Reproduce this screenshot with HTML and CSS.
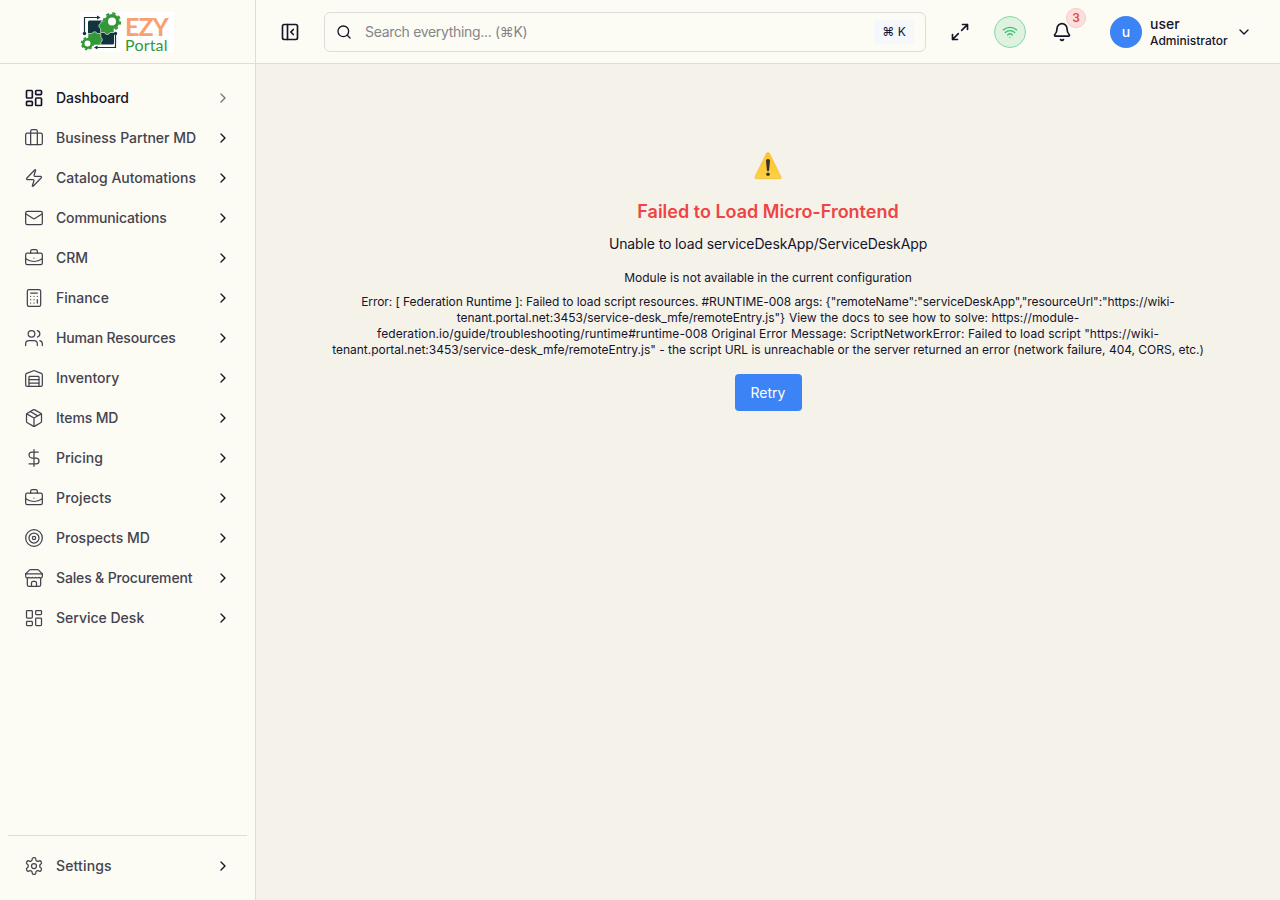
FILE: index.html
```html
<!DOCTYPE html>
<html lang="en">
<head>
    <meta charset="UTF-8">
    <meta name="viewport" content="width=device-width, initial-scale=1.0">
    <title>EZY Portal</title>
    <link rel="stylesheet" href="styles.css">
</head>
<body>
    <!-- Shared icons -->
    <svg class="sprite" xmlns="http://www.w3.org/2000/svg">
        <symbol id="chevron" viewBox="0 0 24 24"><path d="m9 18 6-6-6-6"/></symbol>
        <symbol id="dashboard" viewBox="0 0 24 24">
            <rect width="7" height="9" x="3" y="3" rx="1"/><rect width="7" height="5" x="14" y="3" rx="1"/>
            <rect width="7" height="9" x="14" y="12" rx="1"/><rect width="7" height="5" x="3" y="16" rx="1"/>
        </symbol>
        <symbol id="briefcase" viewBox="0 0 24 24">
            <path d="M12 12h.01"/><path d="M16 6V4a2 2 0 0 0-2-2h-4a2 2 0 0 0-2 2v2"/>
            <path d="M22 13a18.15 18.15 0 0 1-20 0"/><rect width="20" height="14" x="2" y="6" rx="2"/>
        </symbol>
    </svg>

    <div class="layout">
        <aside class="sidebar">
            <div class="brand">
                <div class="logo">
                    <svg class="logo-mark" viewBox="0 0 42 40">
                        <!-- circuit lines -->
                        <path fill="none" stroke="#12343f" stroke-width="1.2" d="M4.500 20V5.500H18M17 35.500h18.500V22"/>
                        <g fill="#12343f">
                            <circle cx="4.500" cy="21.500" r="1.700"/><circle cx="35.500" cy="21.500" r="1.700"/>
                            <path d="m17 3.500 3.500 2-3.500 2zM17.500 33.500l-3.500 2 3.500 2z"/>
                            <rect x="8" y="8.500" width="26" height="24" rx="1.500"/>
                        </g>
                        <!-- puzzle pieces -->
                        <path fill="#339837" stroke="#fff" stroke-width=".6" d="M21.500 9H34v11.500h-4a2.800 2.800 0 0 1-5.400 0h-4v-4a2.800 2.800 0 0 1 0-5.200z"/>
                        <path fill="#339837" stroke="#fff" stroke-width=".6" d="M8 21.500h4a2.800 2.800 0 0 1 5.200 0h3.600v3.700a2.800 2.800 0 0 1 0 5V33H8z"/>
                        <!-- gears -->
                        <circle cx="32" cy="9.500" r="5.800" fill="#fff" stroke="#339837" stroke-width="3.600"/>
                        <circle cx="32" cy="9.500" r="8.200" fill="none" stroke="#339837" stroke-width="2" stroke-dasharray="3.220 3.220"/>
                        <circle cx="7.500" cy="31.500" r="4.300" fill="#fff" stroke="#339837" stroke-width="2.600"/>
                        <circle cx="7.500" cy="31.500" r="6" fill="none" stroke="#339837" stroke-width="1.500" stroke-dasharray="2.360 2.350"/>
                    </svg>
                    <div class="logo-text">
                        <span class="logo-ezy">EZY</span>
                        <span class="logo-portal">Portal</span>
                    </div>
                </div>
            </div>

            <nav class="menu">
                <a class="item active">
                    <svg class="icon"><use href="#dashboard"/></svg>
                    <span>Dashboard</span>
                    <svg class="chevron"><use href="#chevron"/></svg>
                </a>
                <a class="item">
                    <svg class="icon" viewBox="0 0 24 24"><path d="M16 20V4a2 2 0 0 0-2-2h-4a2 2 0 0 0-2 2v16"/><rect width="20" height="14" x="2" y="6" rx="2"/></svg>
                    <span>Business Partner MD</span>
                    <svg class="chevron"><use href="#chevron"/></svg>
                </a>
                <a class="item">
                    <svg class="icon" viewBox="0 0 24 24"><path d="M4 14a1 1 0 0 1-.78-1.630l9.900-10.200a.5.5 0 0 1 .86.460l-1.920 6.020A1 1 0 0 0 13 10h7a1 1 0 0 1 .78 1.630l-9.900 10.200a.5.5 0 0 1-.86-.460l1.920-6.020A1 1 0 0 0 11 14z"/></svg>
                    <span>Catalog Automations</span>
                    <svg class="chevron"><use href="#chevron"/></svg>
                </a>
                <a class="item tight">
                    <svg class="icon" viewBox="0 0 24 24"><rect width="20" height="16" x="2" y="4" rx="2"/><path d="m22 7-8.970 5.700a1.940 1.940 0 0 1-2.060 0L2 7"/></svg>
                    <span>Communications</span>
                    <svg class="chevron"><use href="#chevron"/></svg>
                </a>
                <a class="item">
                    <svg class="icon"><use href="#briefcase"/></svg>
                    <span>CRM</span>
                    <svg class="chevron"><use href="#chevron"/></svg>
                </a>
                <a class="item">
                    <svg class="icon" viewBox="0 0 24 24"><rect width="16" height="20" x="4" y="2" rx="2"/><path d="M8 6h8M16 14v4M16 10h.01M12 10h.01M8 10h.01M12 14h.01M8 14h.01M12 18h.01M8 18h.01"/></svg>
                    <span>Finance</span>
                    <svg class="chevron"><use href="#chevron"/></svg>
                </a>
                <a class="item tight">
                    <svg class="icon" viewBox="0 0 24 24"><path d="M16 21v-2a4 4 0 0 0-4-4H6a4 4 0 0 0-4 4v2"/><circle cx="9" cy="7" r="4"/><path d="M22 21v-2a4 4 0 0 0-3-3.870M16 3.130a4 4 0 0 1 0 7.750"/></svg>
                    <span>Human Resources</span>
                    <svg class="chevron"><use href="#chevron"/></svg>
                </a>
                <a class="item">
                    <svg class="icon" viewBox="0 0 24 24"><path d="M22 8.350V20a2 2 0 0 1-2 2H4a2 2 0 0 1-2-2V8.350A2 2 0 0 1 3.260 6.500l8-3.200a2 2 0 0 1 1.480 0l8 3.200A2 2 0 0 1 22 8.350Z"/><path d="M6 18h12M6 14h12"/><path d="M18 22V11a1 1 0 0 0-1-1H7a1 1 0 0 0-1 1v11"/></svg>
                    <span>Inventory</span>
                    <svg class="chevron"><use href="#chevron"/></svg>
                </a>
                <a class="item tight">
                    <svg class="icon" viewBox="0 0 24 24"><path d="M11 21.730a2 2 0 0 0 2 0l7-4A2 2 0 0 0 21 16V8a2 2 0 0 0-1-1.730l-7-4a2 2 0 0 0-2 0l-7 4A2 2 0 0 0 3 8v8a2 2 0 0 0 1 1.730z"/><path d="M12 22V12M3.300 7 12 12l8.700-5M7.500 4.270l9 5.150"/></svg>
                    <span>Items MD</span>
                    <svg class="chevron"><use href="#chevron"/></svg>
                </a>
                <a class="item">
                    <svg class="icon" viewBox="0 0 24 24"><path d="M12 2v20M17 5H9.500a3.500 3.500 0 0 0 0 7h5a3.500 3.500 0 0 1 0 7H6"/></svg>
                    <span>Pricing</span>
                    <svg class="chevron"><use href="#chevron"/></svg>
                </a>
                <a class="item wide">
                    <svg class="icon"><use href="#briefcase"/></svg>
                    <span>Projects</span>
                    <svg class="chevron"><use href="#chevron"/></svg>
                </a>
                <a class="item">
                    <svg class="icon" viewBox="0 0 24 24"><circle cx="12" cy="12" r="10"/><circle cx="12" cy="12" r="6"/><circle cx="12" cy="12" r="2"/></svg>
                    <span>Prospects MD</span>
                    <svg class="chevron"><use href="#chevron"/></svg>
                </a>
                <a class="item tight">
                    <svg class="icon" viewBox="0 0 24 24"><path d="m2 7 4.410-4.410A2 2 0 0 1 7.830 2h8.340a2 2 0 0 1 1.420.590L22 7"/><path d="M4 12v8a2 2 0 0 0 2 2h12a2 2 0 0 0 2-2v-8"/><path d="M15 22v-4a2 2 0 0 0-2-2h-2a2 2 0 0 0-2 2v4M2 7h20"/><path d="M22 7v3a2 2 0 0 1-2 2a2.700 2.700 0 0 1-1.590-.630.7.7 0 0 0-.820 0A2.700 2.700 0 0 1 16 12a2.700 2.700 0 0 1-1.590-.630.7.7 0 0 0-.820 0A2.700 2.700 0 0 1 12 12a2.700 2.700 0 0 1-1.590-.630.7.7 0 0 0-.820 0A2.700 2.700 0 0 1 8 12a2.700 2.700 0 0 1-1.590-.630.7.7 0 0 0-.820 0A2.700 2.700 0 0 1 4 12a2 2 0 0 1-2-2V7"/></svg>
                    <span>Sales &amp; Procurement</span>
                    <svg class="chevron"><use href="#chevron"/></svg>
                </a>
                <a class="item">
                    <svg class="icon"><use href="#dashboard"/></svg>
                    <span>Service Desk</span>
                    <svg class="chevron"><use href="#chevron"/></svg>
                </a>
            </nav>

            <div class="sidebar-footer">
                <a class="item wide">
                    <svg class="icon" viewBox="0 0 24 24"><path d="M12.220 2h-.440a2 2 0 0 0-2 2v.180a2 2 0 0 1-1 1.730l-.430.250a2 2 0 0 1-2 0l-.150-.080a2 2 0 0 0-2.730.730l-.220.380a2 2 0 0 0 .730 2.730l.150.100a2 2 0 0 1 1 1.720v.510a2 2 0 0 1-1 1.740l-.150.090a2 2 0 0 0-.730 2.730l.220.380a2 2 0 0 0 2.730.730l.150-.080a2 2 0 0 1 2 0l.430.250a2 2 0 0 1 1 1.730V20a2 2 0 0 0 2 2h.440a2 2 0 0 0 2-2v-.180a2 2 0 0 1 1-1.730l.430-.250a2 2 0 0 1 2 0l.150.080a2 2 0 0 0 2.730-.730l.220-.390a2 2 0 0 0-.730-2.730l-.150-.080a2 2 0 0 1-1-1.740v-.500a2 2 0 0 1 1-1.740l.150-.090a2 2 0 0 0 .730-2.730l-.220-.380a2 2 0 0 0-2.730-.730l-.150.080a2 2 0 0 1-2 0l-.430-.250a2 2 0 0 1-1-1.730V4a2 2 0 0 0-2-2z"/><circle cx="12" cy="12" r="3"/></svg>
                    <span>Settings</span>
                    <svg class="chevron"><use href="#chevron"/></svg>
                </a>
            </div>
        </aside>

        <div class="main">
            <header class="topbar">
                <svg class="toggle" viewBox="0 0 24 24"><rect width="18" height="18" x="3" y="3" rx="2"/><path d="M9 3v18M16 15l-3-3 3-3"/></svg>
                <div class="search">
                    <svg viewBox="0 0 24 24"><circle cx="11" cy="11" r="8"/><path d="m21 21-4.300-4.300"/></svg>
                    <span class="placeholder">Search everything... (⌘K)</span>
                    <span class="kbd">⌘ K</span>
                </div>
                <svg class="expand" viewBox="0 0 24 24"><path d="M15 3h6v6M21 3l-7 7M3 21l7-7M9 21H3v-6"/></svg>
                <div class="status">
                    <svg viewBox="0 0 24 24"><path d="M12 20h.01M2 8.820a15 15 0 0 1 20 0M5 12.860a10 10 0 0 1 14 0M8.500 16.430a5 5 0 0 1 7 0"/></svg>
                </div>
                <div class="bell">
                    <svg viewBox="0 0 24 24"><path d="M10.270 21a2 2 0 0 0 3.460 0"/><path d="M3.260 15.330A1 1 0 0 0 4 17h16a1 1 0 0 0 .740-1.670C19.410 13.960 18 12.500 18 8A6 6 0 0 0 6 8c0 4.500-1.410 5.960-2.740 7.330"/></svg>
                    <span class="badge">3</span>
                </div>
                <div class="user">
                    <div class="avatar">u</div>
                    <div class="user-info">
                        <span class="user-name">user</span>
                        <span class="user-role">Administrator</span>
                    </div>
                    <svg viewBox="0 0 24 24"><path d="m6 9 6 6 6-6"/></svg>
                </div>
            </header>

            <main class="error">
                <svg class="warning" viewBox="0 0 28 28">
                    <defs>
                        <linearGradient id="amber" x1="0" y1="0" x2="0" y2="1">
                            <stop offset="0" stop-color="#fbc52c"/>
                            <stop offset="1" stop-color="#ffd044"/>
                        </linearGradient>
                    </defs>
                    <path fill="url(#amber)" stroke="#f2b32c" stroke-width=".6" d="M12.600 1.200Q14-.3 15.400 1.200L27 24.900Q27.500 26.700 25.800 26.700H2.200Q.5 26.700 1 24.900Z"/>
                    <path fill="#34332f" d="M12 8.500Q12 7 14 7t2 1.500l-.900 9.700q-.1 1.100-1.100 1.100t-1.100-1.100z"/>
                    <circle cx="14" cy="22.300" r="1.800" fill="#34332f"/>
                </svg>
                <h1>Failed to Load Micro-Frontend</h1>
                <p class="summary">Unable to load serviceDeskApp/ServiceDeskApp</p>
                <p class="reason">Module is not available in the current configuration</p>
                <p class="details">
                    <span class="l1">Error: [ Federation Runtime ]: Failed to load script resources. #RUNTIME-008 args: {"remoteName":"serviceDeskApp","resourceUrl":"https://wiki-</span>
                    <span class="l2">tenant.portal.net:3453/service-desk_mfe/remoteEntry.js"} View the docs to see how to solve: https://module-</span>
                    <span class="l3">federation.io/guide/troubleshooting/runtime#runtime-008 Original Error Message: ScriptNetworkError: Failed to load script "https://wiki-</span>
                    <span class="l4">tenant.portal.net:3453/service-desk_mfe/remoteEntry.js" - the script URL is unreachable or the server returned an error (network failure, 404, CORS, etc.)</span>
                </p>
                <button class="retry">Retry</button>
            </main>
        </div>
    </div>
</body>
</html>
```
FILE: styles.css
```css
* {
    box-sizing: border-box;
}
body {
    margin: 0;
    font-family: Inter, "DejaVu Sans", sans-serif;
    font-size: 14px;
    color: #14142b;
    background-color: #f5f2ea;
}
svg {
    flex-shrink: 0;
    fill: none;
    stroke: currentColor;
    stroke-width: 2;
    stroke-linecap: round;
    stroke-linejoin: round;
}
.sprite {
    display: none;
}
.layout {
    display: flex;
    height: 100vh;
}

/* Sidebar */
.sidebar {
    display: flex;
    flex-direction: column;
    width: 256px;
    background-color: #fcfbf4;
    border-right: 1px solid #dfddd7;
}
.brand {
    display: flex;
    justify-content: center;
    height: 64px;
    padding: 12px 0 0;
    border-bottom: 1px solid #dfddd7;
}
.logo {
    display: flex;
    width: 94px;
    height: 40px;
    margin-right: 1px;
    background-color: #fff;
}
.logo-mark {
    width: 42px;
    height: 40px;
    stroke: none;
    stroke-linecap: butt;
}
.logo-text {
    display: flex;
    flex-direction: column;
    font-family: Lato, sans-serif;
    padding: 4px 0 0 3px;
}
.logo-ezy {
    font-size: 25px;
    line-height: 21px;
    font-weight: 700;
    letter-spacing: -1px;
    color: #f6a26f;
}
.logo-portal {
    font-size: 16px;
    line-height: 15px;
    letter-spacing: 0.2px;
    color: #339837;
}
.menu {
    display: flex;
    flex-direction: column;
    flex: 1;
    gap: 4px;
    padding: 16px 12px;
}
.item {
    display: flex;
    align-items: center;
    gap: 12px;
    height: 36px;
    padding: 0 12px;
    font-weight: 500;
    color: #43434f;
}
.item span {
    flex: 1;
    padding-bottom: 1px;
    white-space: nowrap;
}
.tight {
    letter-spacing: -0.15px;
}
.wide {
    letter-spacing: 0.15px;
}
.icon {
    width: 20px;
    height: 20px;
    stroke-width: 1.5;
}
.chevron {
    width: 16px;
    height: 16px;
    color: #14142b;
}
.active {
    color: #14142b;
}
.active .icon {
    stroke-width: 2;
}
.active .chevron {
    color: #777;
}
.sidebar-footer {
    margin: 0 8px;
    padding: 12px 4px 16px;
    border-top: 1px solid #dfddd7;
}

/* Header */
.main {
    display: flex;
    flex-direction: column;
    flex: 1;
}
.topbar {
    display: flex;
    align-items: center;
    height: 64px;
    padding: 0 28px 0 24px;
    background-color: #fcfbf4;
    border-bottom: 1px solid #dfddd7;
}
.toggle {
    width: 20px;
    height: 20px;
}
.search {
    display: flex;
    align-items: center;
    width: 602px;
    height: 40px;
    margin-left: 24px;
    padding: 0 11px;
    border: 1px solid #dfddd7;
    border-radius: 6px;
}
.search svg {
    width: 16px;
    height: 16px;
}
.placeholder {
    flex: 1;
    margin-left: 13px;
    letter-spacing: -0.32px;
    color: #85858a;
}
.kbd {
    width: 40px;
    height: 24px;
    border-radius: 4px;
    background-color: #f5f7fb;
    font-size: 12px;
    line-height: 24px;
    text-align: center;
    white-space: nowrap;
}
.expand {
    width: 20px;
    height: 20px;
    margin-left: 24px;
}
.status {
    display: flex;
    align-items: center;
    justify-content: center;
    width: 32px;
    height: 32px;
    margin-left: 24px;
    border: 1px solid #83d9a4;
    border-radius: 50%;
    background-color: #dff2e0;
    color: #34c46d;
}
.status svg {
    width: 16px;
    height: 16px;
}
.bell {
    position: relative;
    display: flex;
    margin-left: 26px;
}
.bell svg {
    width: 20px;
    height: 20px;
}
.badge {
    position: absolute;
    top: -14px;
    left: 14px;
    width: 20px;
    height: 20px;
    border: 1px solid #fac9c6;
    border-radius: 50%;
    background-color: #fce0dc;
    color: #e5484d;
    font-size: 12px;
    font-weight: 600;
    line-height: 18px;
    text-align: center;
}
.user {
    display: flex;
    align-items: center;
    flex: 1;
    margin-left: 38px;
    font-weight: 500;
}
.avatar {
    width: 32px;
    height: 32px;
    border-radius: 50%;
    background-color: #3c83f6;
    color: #fff;
    line-height: 32px;
    text-align: center;
}
.user-info {
    display: flex;
    flex-direction: column;
    flex: 1;
    margin-left: 8px;
    padding-top: 1px;
}
.user-name {
    line-height: 18px;
}
.user-role {
    font-size: 12px;
    line-height: 16px;
}
.user svg {
    width: 16px;
    height: 16px;
}

/* Error message */
.error {
    display: flex;
    flex-direction: column;
    align-items: center;
    padding-top: 88px;
    text-align: center;
    white-space: nowrap;
}
.warning {
    width: 28px;
    height: 28px;
    stroke: none;
}
.error h1 {
    margin: 18px 0 0;
    font-size: 18px;
    font-weight: 600;
    line-height: 28px;
    color: #ef4444;
}
.error p {
    margin: 0;
}
.error .summary {
    margin-top: 8px;
    line-height: 20px;
    letter-spacing: -0.12px;
}
.error .reason {
    margin-top: 16px;
    font-size: 12px;
    line-height: 16px;
}
.error .details {
    display: flex;
    flex-direction: column;
    align-items: center;
    margin-top: 8px;
    font-size: 12px;
    line-height: 16px;
}
.l1 {
    letter-spacing: -0.07px;
}
.l2 {
    letter-spacing: -0.02px;
    word-spacing: 0.4px;
}
.l3 {
    letter-spacing: 0.075px;
}
.l4 {
    letter-spacing: -0.015px;
}
.retry {
    width: 67px;
    height: 37px;
    margin-top: 16px;
    border: none;
    border-radius: 4px;
    background-color: #3c83f6;
    color: #fff;
    font-family: inherit;
    font-size: 14px;
}
```
